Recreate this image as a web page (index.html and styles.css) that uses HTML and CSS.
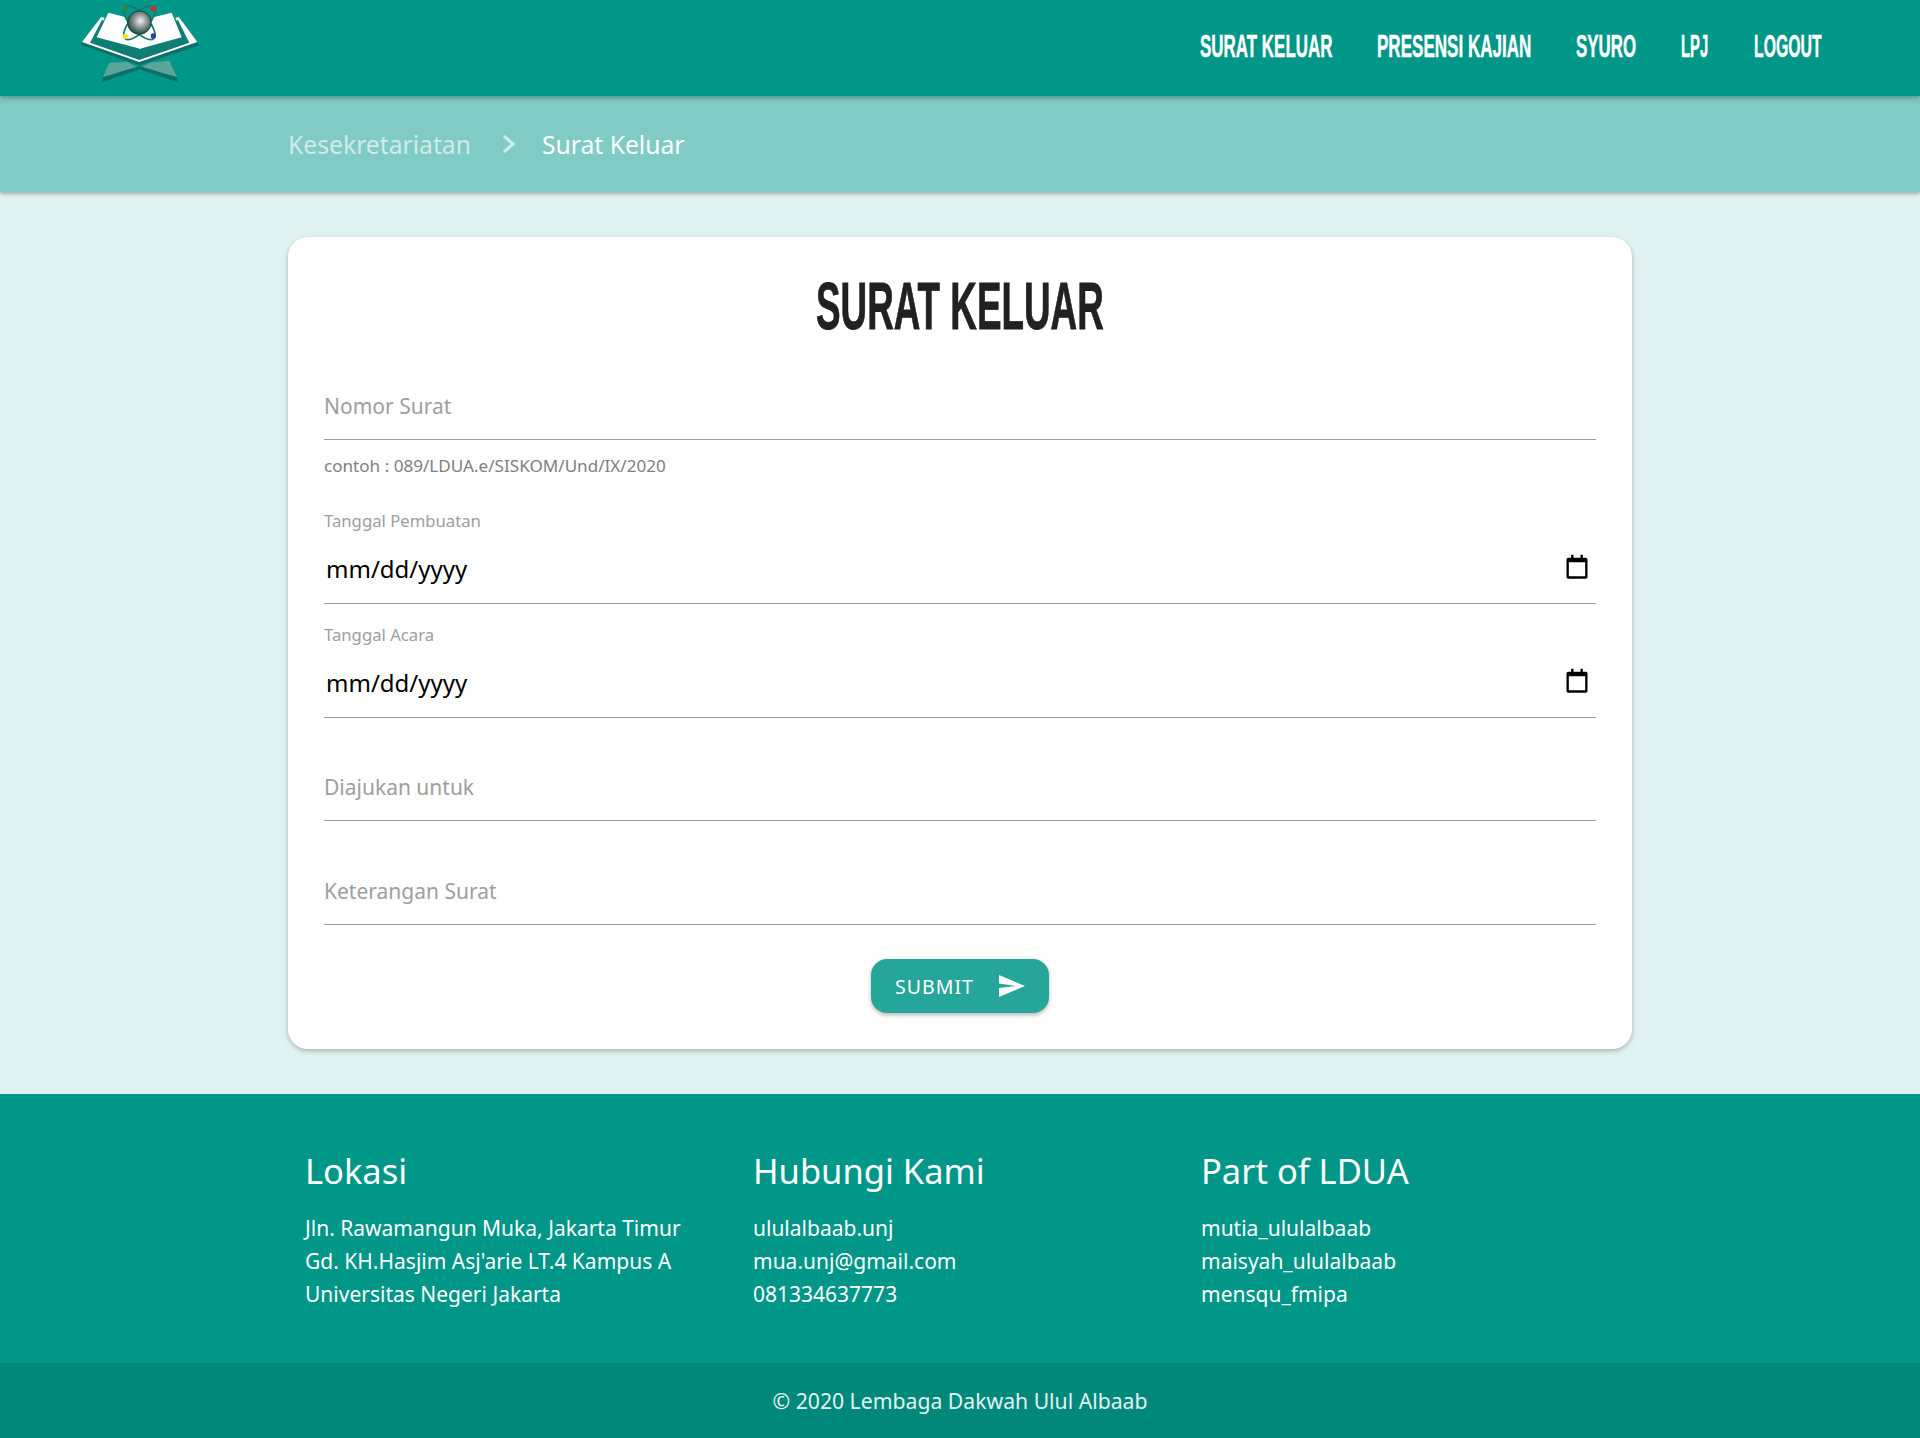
FILE: index.html
```html
<!DOCTYPE html>
<html lang="id">
<head>
<meta charset="utf-8">
<title>Surat Keluar</title>
<link rel="stylesheet" href="styles.css">
</head>
<body>
<header class="nav">
  <svg class="logo" viewBox="120 0 360 288" aria-hidden="true">
    <defs>
      <radialGradient id="globe" cx="0.55" cy="0.42" r="0.6">
        <stop offset="0" stop-color="#f0f0f0"/>
        <stop offset="0.55" stop-color="#7f8a88"/>
        <stop offset="1" stop-color="#17433f"/>
      </radialGradient>
    </defs>
    <path d="M188 233 L208 188 L262 186 L298 205 Z" fill="#5aa69d"/>
    <path d="M412 233 L388 182 L330 188 L298 205 Z" fill="#5aa69d"/>
    <path d="M188 232 L298 198 L412 232 L412 246 L298 208 L188 246Z" fill="#0d6f66"/>
    <path d="M122 134 L130 124 L298 178 L470 124 L478 136 L298 196Z" fill="#0d6f66"/>
    <path d="M126 126 L184 50 L194 54 L156 124 L298 174 L444 124 L406 54 L416 50 L472 126 L298 186Z" fill="#fff"/>
    <path d="M150 128 L186 60 L298 142 L414 60 L448 128 L298 180Z" fill="#0f7d72"/>
    <path d="M170 112 L205 38 L258 52 L300 146 Z" fill="#fff"/>
    <path d="M425 112 L395 38 L340 52 L300 146 Z" fill="#fff"/>
    <path d="M240 60 L360 60 L340 125 L300 146 L258 125Z" fill="#fff"/>
    <g fill="none" stroke="#0f7d72" stroke-width="5">
      <ellipse cx="298" cy="68" rx="26" ry="64" transform="rotate(42 298 68)"/>
      <ellipse cx="298" cy="68" rx="26" ry="64" transform="rotate(-42 298 68)"/>
    </g>
    <circle cx="298" cy="68" r="35" fill="url(#globe)" stroke="#17433f" stroke-width="3"/>
    <circle cx="256" cy="25" r="8" fill="#2e8b3a"/>
    <circle cx="340" cy="26" r="8" fill="#d82a2a"/>
    <circle cx="256" cy="109" r="8" fill="#f2e32c"/>
    <circle cx="340" cy="108" r="8" fill="#2b3fa8"/>
  </svg>
  <nav class="menu">
    <a class="menu-link w1"><span class="menu-text s1">SURAT KELUAR</span></a>
    <a class="menu-link w2"><span class="menu-text s2">PRESENSI KAJIAN</span></a>
    <a class="menu-link w3"><span class="menu-text s3">SYURO</span></a>
    <a class="menu-link w4"><span class="menu-text s4">LPJ</span></a>
    <a class="menu-link w5"><span class="menu-text s5">LOGOUT</span></a>
  </nav>
</header>

<div class="crumbs">
  <div class="crumbs-inner">
    <span class="crumb-muted">Kesekretariatan</span>
    <svg class="chevron" viewBox="0 0 14 20" aria-hidden="true"><path d="M2 2 L11 10 L2 18" fill="none" stroke="#d0ebe7" stroke-width="3.200"/></svg>
    <span class="crumb">Surat Keluar</span>
  </div>
</div>

<main class="main">
  <section class="card">
    <h1 class="title"><span class="title-text">SURAT KELUAR</span></h1>

    <div class="field field-first">
      <div class="input placeholder">Nomor Surat</div>
    </div>
    <p class="hint">contoh : 089/LDUA.e/SISKOM/Und/IX/2020</p>

    <div class="date-field date-first">
      <div class="small-label">Tanggal Pembuatan</div>
      <div class="date-input">
        <span class="date-value">mm/dd/yyyy</span>
        <svg class="cal" viewBox="0 0 24 24" aria-hidden="true"><path d="M7 1.500h2V4h6V1.500h2V4h2.500A1.500 1.500 0 0 1 21 5.500V20.500A1.500 1.500 0 0 1 19.500 22h-15A1.500 1.500 0 0 1 3 20.500V5.500A1.500 1.500 0 0 1 4.500 4H7Z M5 8v12h14V8Z" fill="#000" fill-rule="evenodd"/></svg>
      </div>
    </div>

    <div class="date-field">
      <div class="small-label">Tanggal Acara</div>
      <div class="date-input">
        <span class="date-value">mm/dd/yyyy</span>
        <svg class="cal" viewBox="0 0 24 24" aria-hidden="true"><path d="M7 1.500h2V4h6V1.500h2V4h2.500A1.500 1.500 0 0 1 21 5.500V20.500A1.500 1.500 0 0 1 19.500 22h-15A1.500 1.500 0 0 1 3 20.500V5.500A1.500 1.500 0 0 1 4.500 4H7Z M5 8v12h14V8Z" fill="#000" fill-rule="evenodd"/></svg>
      </div>
    </div>

    <div class="field field-third">
      <div class="input placeholder">Diajukan untuk</div>
    </div>
    <div class="field field-fourth">
      <div class="input placeholder">Keterangan Surat</div>
    </div>

    <div class="actions">
      <button class="submit" type="button">
        <span>SUBMIT</span>
        <svg class="send" viewBox="0 0 26 22" aria-hidden="true"><path d="M0 0 L26 11 L0 22 L0 13 L17 11 L0 8.500Z" fill="#fff"/></svg>
      </button>
    </div>
  </section>
</main>

<footer class="footer">
  <div class="footer-grid">
    <div class="col">
      <h2 class="col-title">Lokasi</h2>
      <p class="line">Jln. Rawamangun Muka, Jakarta Timur</p>
      <p class="line">Gd. KH.Hasjim Asj'arie LT.4 Kampus A</p>
      <p class="line">Universitas Negeri Jakarta</p>
    </div>
    <div class="col">
      <h2 class="col-title">Hubungi Kami</h2>
      <p class="line">ululalbaab.unj</p>
      <p class="line">mua.unj@gmail.com</p>
      <p class="line">081334637773</p>
    </div>
    <div class="col">
      <h2 class="col-title">Part of LDUA</h2>
      <p class="line">mutia_ululalbaab</p>
      <p class="line">maisyah_ululalbaab</p>
      <p class="line">mensqu_fmipa</p>
    </div>
  </div>
  <div class="copyright">© 2020 Lembaga Dakwah Ulul Albaab</div>
</footer>
</body>
</html>
```
FILE: styles.css
```css
* { box-sizing: border-box; }
html, body { margin: 0; padding: 0; }
body {
  background: #e0f2f1;
  font-family: "Noto Sans", "Open Sans", sans-serif;
  color: #212121;
  height: 1438px;
  display: flex;
  flex-direction: column;
}
.nav {
  height: 96px;
  background: #009688;
  display: flex;
  justify-content: space-between;
  align-items: flex-start;
  padding: 0 98px 0 80px;
  box-shadow: 0 2px 5px rgba(0,0,0,.3);
  position: relative;
  z-index: 2;
}
.logo { width: 120px; height: 96px; display: block; }
.menu { display: flex; gap: 44px; height: 94px; align-items: center; }
.menu-link { display: block; height: 36px; line-height: 36px; white-space: nowrap; }
.menu-text {
  display: inline-block;
  font-family: "Liberation Sans", sans-serif;
  font-weight: 700;
  font-size: 31px;
  color: #fff;
  -webkit-text-stroke: 0.5px #fff;
  transform-origin: left center;
}
.w1 { width: 133px; }
.w2 { width: 155px; }
.w3 { width: 61px; }
.w4 { width: 29px; }
.w5 { width: 68px; }
.s1 { transform: scaleX(.547); }
.s2 { transform: scaleX(.55); }
.s3 { transform: scaleX(.545); }
.s4 { transform: scaleX(.48); }
.s5 { transform: scaleX(.51); }
.crumbs {
  height: 96px;
  background: #80cbc4;
  box-shadow: 0 2px 4px rgba(0,0,0,.3);
  position: relative;
  z-index: 1;
}
.crumbs-inner {
  width: 1344px;
  margin: 0 auto;
  height: 96px;
  display: flex;
  align-items: center;
  font-size: 24.700px;
}
.crumb-muted { color: #d0ebe7; }
.crumb { color: #fff; }
.chevron { width: 14px; height: 20px; margin: 0 26px 0 31px; }
.main { padding: 45px 0; flex: none; }
.card {
  width: 1344px;
  margin: 0 auto;
  height: 812px;
  background: #fff;
  border-radius: 20px;
  padding: 36px;
  box-shadow: 0 2px 5px rgba(0,0,0,.25);
}
.title {
  margin: 0;
  text-align: center;
  font-weight: 700;
  line-height: 66px;
  color: #212121;
}
.title-text {
  display: inline-block;
  font-family: "Liberation Sans", sans-serif;
  font-size: 66px;
  -webkit-text-stroke: 0.8px #212121;
  transform: scaleX(.558);
}
.field { display: block; }
.field-first { margin-top: 32px; }
.field-third { margin-top: 45px; }
.field-fourth { margin-top: 46px; }
.input {
  height: 58px;
  border-bottom: 1px solid #9e9e9e;
  display: flex;
  align-items: center;
  padding-bottom: 10px;
  font-size: 21px;
}
.placeholder { color: #9e9e9e; }
.hint {
  margin: 14px 0 0;
  font-size: 17.100px;
  line-height: 24px;
  color: #808080;
}
.small-label { font-size: 16.700px; line-height: 24px; color: #9e9e9e; }
.date-first { margin-top: 31px; }
.date-field + .date-field { margin-top: 19px; }
.date-input {
  height: 71px;
  border-bottom: 1px solid #9e9e9e;
  display: flex;
  align-items: center;
  justify-content: space-between;
  padding: 0 5px 0 2px;
}
.date-value { font-size: 24px; color: #000; }
.cal { width: 28px; height: 28px; margin-bottom: 2px; }
.actions { display: flex; justify-content: center; margin-top: 34px; }
.submit {
  width: 178px;
  height: 54px;
  border: 0;
  border-radius: 16px;
  background: #26a69a;
  color: #fff;
  font-family: inherit;
  font-size: 19.500px;
  letter-spacing: 1px;
  display: flex;
  align-items: center;
  justify-content: center;
  gap: 25px;
  padding: 0;
  box-shadow: 0 2px 4px rgba(0,0,0,.3);
}
.send { width: 26px; height: 22px; }
.footer {
  flex: 1;
  background: #009688;
  color: #fff;
  display: flex;
  flex-direction: column;
}
.footer-grid {
  width: 1344px;
  margin: 0 auto;
  flex: 1;
  display: grid;
  grid-template-columns: repeat(3, 448px);
  padding-top: 55px;
}
.col { padding-left: 17px; }
.col-title { margin: 0 0 19px; font-size: 34.500px; line-height: 44px; font-weight: 400; }
.line { margin: 0; font-size: 21px; line-height: 33px; }
.copyright {
  height: 75px;
  background: #00897b;
  display: flex;
  align-items: center;
  justify-content: center;
  font-size: 21.200px;
  color: #e0f2f1;
}
```
